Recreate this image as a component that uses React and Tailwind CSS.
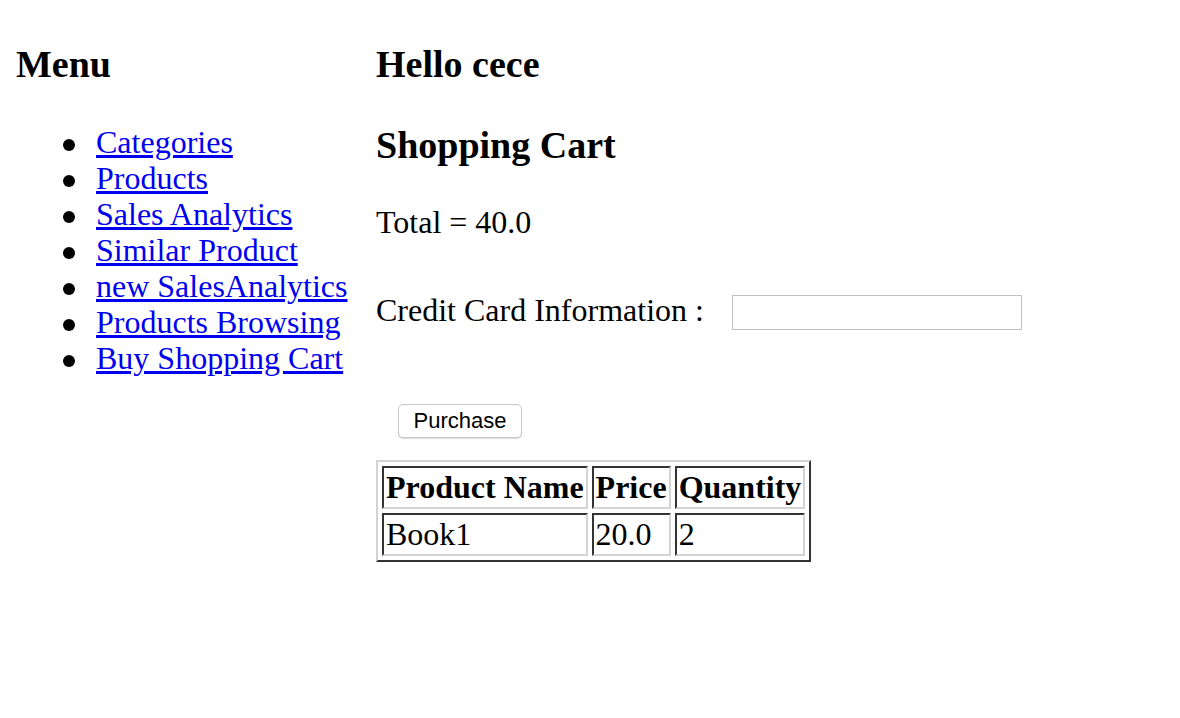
export default function App() {
  const links = [
    "Categories",
    "Products",
    "Sales Analytics",
    "Similar Product",
    "new SalesAnalytics",
    "Products Browsing",
    "Buy Shopping Cart",
  ];
  return (
    <div className="flex min-h-[718px] bg-white pt-[43px] text-black font-['Liberation_Serif',serif] text-[32px] leading-[36px]">
      <div className="w-[376px] shrink-0 pl-4">
        <h3 className="m-0 text-[38px] leading-[43px] font-bold">Menu</h3>
        <ul className="mt-[38px] list-none pl-[80px]">
          {links.map((l) => (
            <li key={l} className="flex items-center leading-[36px]">
              <span className="mt-[6px] -ml-[33px] mr-[21px] h-[12px] w-[12px] shrink-0 rounded-full bg-black" />
              <a href="#" className="text-[#0000EE] underline whitespace-nowrap">
                {l}
              </a>
            </li>
          ))}
        </ul>
      </div>
      <div className="flex flex-col">
        <h3 className="m-0 text-[38px] leading-[43px] font-bold">Hello cece</h3>
        <h3 className="mt-[38px] text-[38px] leading-[43px] font-bold">Shopping Cart</h3>
        <p className="mt-[37px] leading-[36px]">Total = 40.0</p>
        <div className="mt-[52px] flex items-start">
          <span className="w-[356px] shrink-0 leading-[36px]">Credit Card Information :</span>
          <input
            type="text"
            className="mt-[3px] h-[35px] w-[290px] border border-[#c0c0c0] bg-white outline-none"
          />
        </div>
        <div className="mt-[74px] flex pl-[22px]">
          <button className="h-[34px] w-[124px] rounded-[5px] border border-[#c8c8c8] bg-white font-['Liberation_Sans',sans-serif] text-[22px] leading-[26px] text-black shadow-[0_1px_1px_rgba(0,0,0,0.15)]">
            Purchase
          </button>
        </div>
        <div className="mt-[22px] flex">
          <table className="border-separate border-spacing-[4px] border-2 border-t-[#d4d4d4] border-l-[#d4d4d4] border-r-[#333] border-b-[#333]">
            <thead>
              <tr>
                {["Product Name", "Price", "Quantity"].map((h) => (
                  <th
                    key={h}
                    className="border-2 border-t-[#333] border-l-[#333] border-r-[#d4d4d4] border-b-[#d4d4d4] p-[2px] text-left font-bold leading-[35px] whitespace-nowrap"
                  >
                    {h}
                  </th>
                ))}
              </tr>
            </thead>
            <tbody>
              <tr>
                {["Book1", "20.0", "2"].map((c) => (
                  <td
                    key={c}
                    className="border-2 border-t-[#333] border-l-[#333] border-r-[#d4d4d4] border-b-[#d4d4d4] p-[2px] leading-[35px]"
                  >
                    {c}
                  </td>
                ))}
              </tr>
            </tbody>
          </table>
        </div>
      </div>
    </div>
  );
}
